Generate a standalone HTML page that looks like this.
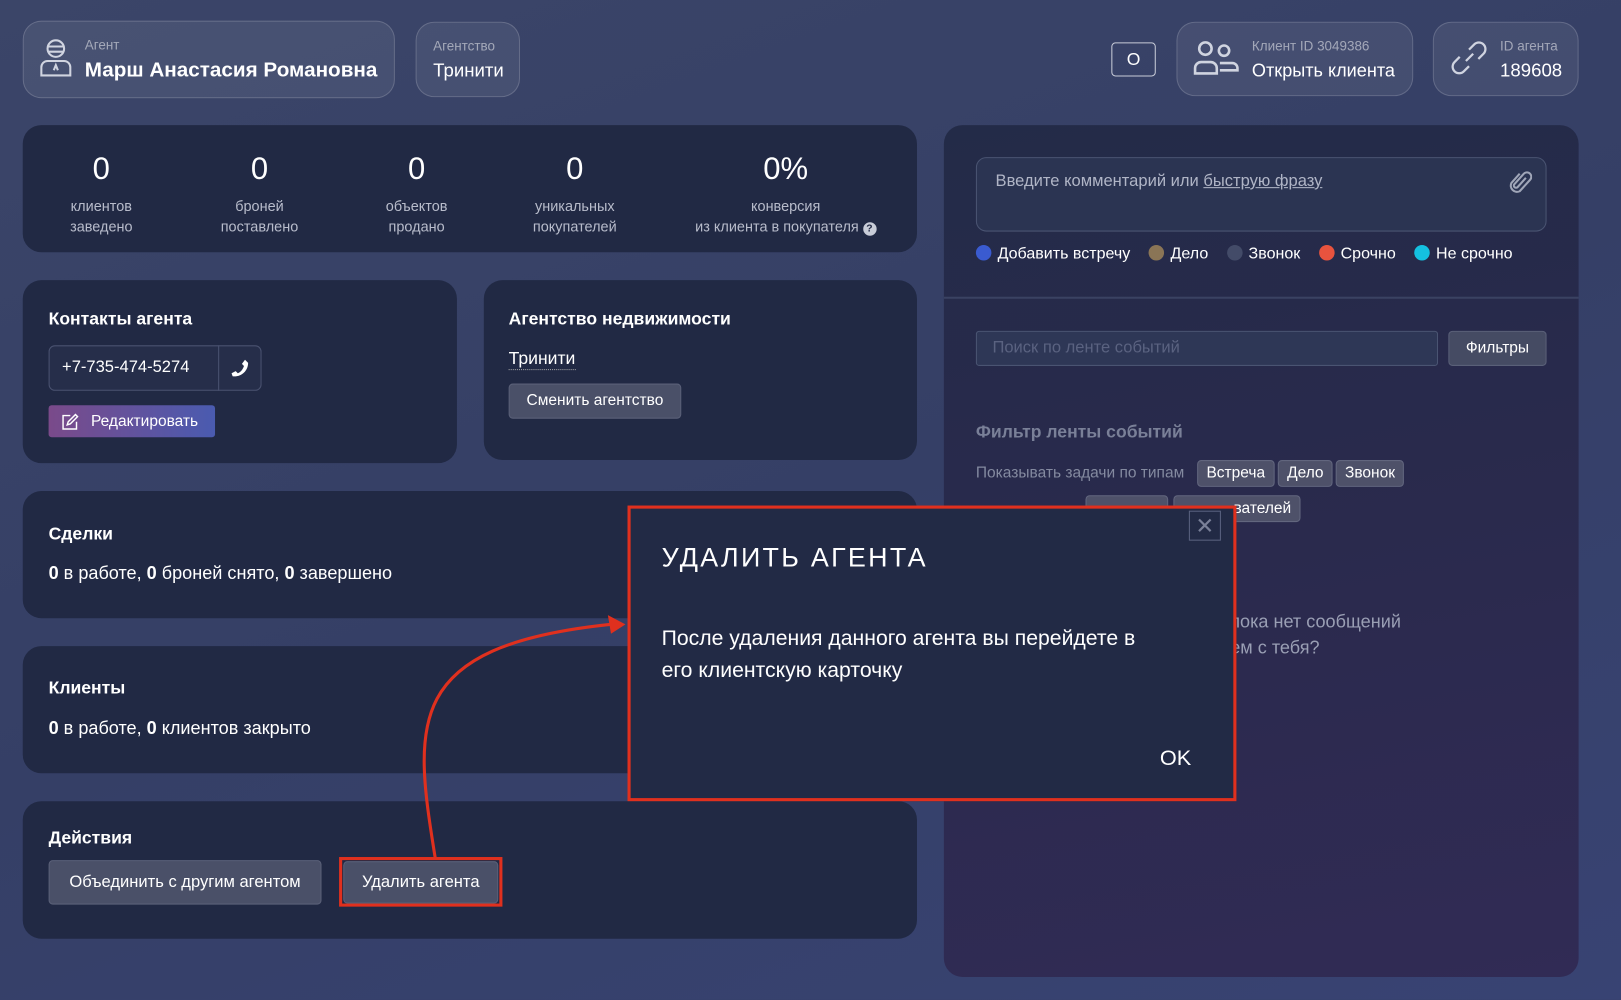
<!DOCTYPE html>
<html><head><meta charset="utf-8"><style>
*{box-sizing:border-box;margin:0;padding:0}
html,body{width:1621px;height:1000px;overflow:hidden;background:#37416a}
body{font-family:"Liberation Sans",sans-serif;color:#fff}
#w{position:absolute;left:0;top:0;width:1568px;height:967px;transform:scale(1.03380);transform-origin:0 0;background:linear-gradient(160deg,#3b4568 0%,#353f66 50%,#384373 100%)}
.a{position:absolute}
.glass{position:absolute;border-radius:18px;background:rgba(255,255,255,0.07);border:1px solid rgba(255,255,255,0.16)}
.card{position:absolute;background:#212944;border-radius:18px}
.lbl{font-size:13px;color:rgba(255,255,255,0.5)}
.h{font-size:17px;font-weight:bold}
.stat{position:absolute;width:200px;text-align:center;top:147px}
.stat b{display:block;font-size:30px;font-weight:normal;height:42px}
.stat span{display:block;font-size:14px;color:#b8bccb;line-height:20px}
.btn{position:absolute;background:#4a5068;border-radius:4px;font-size:15px;color:#fff;text-align:center;border:1px solid #5a6078}
.tag{position:absolute;background:#4e5169;border:1px solid #62667e;border-radius:4px;font-size:15px;top:445px;height:26px;line-height:24px;padding:0 8px}
.dot{display:inline-block;width:15px;height:15px;border-radius:50%;vertical-align:-2px;margin-right:6px}
.lg span.it{margin-right:18px}
</style></head><body><div id="w">

<div class="glass" style="left:22px;top:20px;width:360px;height:75px"></div>
<svg class="a" style="left:37px;top:37px" width="34" height="38" viewBox="0 0 34 38" fill="none" stroke="#d0d4e0" stroke-width="2"><circle cx="17" cy="10" r="8"/><path d="M9 8h16M10 13h14"/><path d="M3 36v-8a6 6 0 0 1 6-6h16a6 6 0 0 1 6 6v8z"/><path d="M15 31l2-5 2 5"/></svg>
<div class="a lbl" style="left:82px;top:36px">Агент</div>
<div class="a" style="left:82px;top:57px;font-size:20px;font-weight:bold">Марш Анастасия Романовна</div>
<div class="glass" style="left:402px;top:21px;width:101px;height:73px"></div>
<div class="a lbl" style="left:419px;top:37px">Агентство</div>
<div class="a" style="left:419px;top:58px;font-size:18px">Тринити</div>

<div class="a" style="left:1075px;top:41px;width:43px;height:33px;border:1px solid #c8ccd8;border-radius:4px;text-align:center;line-height:31px;font-size:17px">O</div>
<div class="glass" style="left:1138px;top:21px;width:229px;height:72px"></div>
<svg class="a" style="left:1154px;top:39px" width="46" height="34" viewBox="0 0 46 34" fill="none" stroke="#d0d4e0" stroke-width="2.5"><circle cx="12" cy="8" r="6"/><circle cx="30" cy="10" r="5"/><path d="M2 32v-5a6 6 0 0 1 6-6h9a6 6 0 0 1 6 6v5z"/><path d="M26 22h12a5 5 0 0 1 5 5v2H26"/></svg>
<div class="a lbl" style="left:1211px;top:37px">Клиент ID 3049386</div>
<div class="a" style="left:1211px;top:58px;font-size:17.5px">Открыть клиента</div>
<div class="glass" style="left:1386px;top:21px;width:141px;height:72px"></div>
<svg class="a" style="left:1402px;top:37px" width="38" height="38" viewBox="0 0 38 38" fill="none" stroke="#d0d4e0" stroke-width="2.2"><path d="M16 22l7-7"/><path d="M19 11l5-5a6 6 0 0 1 9 9l-5 5"/><path d="M19 27l-5 5a6 6 0 0 1-9-9l5-5"/></svg>
<div class="a lbl" style="left:1451px;top:37px">ID агента</div>
<div class="a" style="left:1451px;top:58px;font-size:18px">189608</div>

<div class="card" style="left:22px;top:121px;width:865px;height:123px"></div>
<div class="stat" style="left:-2px"><b>0</b><span>клиентов<br>заведено</span></div>
<div class="stat" style="left:151px"><b>0</b><span>броней<br>поставлено</span></div>
<div class="stat" style="left:303px"><b>0</b><span>объектов<br>продано</span></div>
<div class="stat" style="left:456px"><b>0</b><span>уникальных<br>покупателей</span></div>
<div class="stat" style="left:640px;width:240px"><b>0%</b><span>конверсия<br>из клиента в покупателя <span style="display:inline-block;width:13px;height:13px;border-radius:50%;background:#c8ccd8;color:#212944;font-size:10px;line-height:13px;font-weight:bold">?</span></span></div>

<div class="card" style="left:22px;top:271px;width:420px;height:177px"></div>
<div class="a h" style="left:47px;top:299px">Контакты агента</div>
<div class="a" style="left:47px;top:334px;width:206px;height:44px;border:1px solid #4a5270;border-radius:6px;background:#262e4a"></div>
<div class="a" style="left:211px;top:334px;width:1px;height:44px;background:#4a5270"></div>
<div class="a" style="left:60px;top:347px;font-size:16px">+7-735-474-5274</div>
<svg class="a" style="left:222px;top:346px" width="20" height="20" viewBox="0 0 20 20"><path d="M15 2l3 3c0 8-7 14-15 13l-1-3 4-2 2 2c3-1 5-4 6-7l-2-2z" fill="#fff"/></svg>
<div class="a" style="left:47px;top:392px;width:161px;height:31px;border-radius:3px;background:linear-gradient(90deg,#7a4a8a,#4a5bb0)"></div>
<svg class="a" style="left:59px;top:399px" width="18" height="18" viewBox="0 0 18 18" fill="none" stroke="#fff" stroke-width="1.4"><path d="M9 3H2v13h13V9"/><path d="M6 12l1-3 7-7 2 2-7 7z"/></svg>
<div class="a" style="left:88px;top:399px;font-size:15px">Редактировать</div>

<div class="card" style="left:468px;top:271px;width:419px;height:174px"></div>
<div class="a h" style="left:492px;top:299px">Агентство недвижимости</div>
<div class="a" style="left:492px;top:337px;font-size:17px;border-bottom:1px dotted #aaa">Тринити</div>
<div class="btn" style="left:492px;top:371px;width:167px;height:34px;line-height:32px">Сменить агентство</div>

<div class="card" style="left:22px;top:475px;width:865px;height:123px"></div>
<div class="a h" style="left:47px;top:507px">Сделки</div>
<div class="a" style="left:47px;top:544px;font-size:17.5px"><b>0</b> в работе, <b>0</b> броней снято, <b>0</b> завершено</div>
<div class="card" style="left:22px;top:625px;width:865px;height:123px"></div>
<div class="a h" style="left:47px;top:656px">Клиенты</div>
<div class="a" style="left:47px;top:694px;font-size:17.5px"><b>0</b> в работе, <b>0</b> клиентов закрыто</div>
<div class="card" style="left:22px;top:775px;width:865px;height:133px"></div>
<div class="a h" style="left:47px;top:801px">Действия</div>
<div class="btn" style="left:47px;top:832px;width:264px;height:43px;line-height:41px;font-size:16px">Объединить с другим агентом</div>
<div class="btn" style="left:332px;top:833px;width:150px;height:41px;line-height:39px;font-size:16px">Удалить агента</div>
<div class="a" style="left:328px;top:829px;width:158px;height:48px;border:3px solid #e0301e"></div>

<div class="a" style="left:913px;top:121px;width:614px;height:824px;border-radius:18px;background:linear-gradient(170deg,#232b48 0%,#2a2a4d 50%,#312b55 100%)"></div>
<div class="a" style="left:913px;top:287px;width:614px;height:2px;background:#3a4262"></div>
<div class="a" style="left:944px;top:152px;width:552px;height:72px;border:1px solid #4a5472;border-radius:10px;background:#2b3452"></div>
<div class="a" style="left:963px;top:167px;font-size:16px;color:#b0b5c6">Введите комментарий или <span style="text-decoration:underline">быструю фразу</span></div>
<svg class="a" style="left:1460px;top:164px" width="22" height="24" viewBox="0 0 22 24" fill="none" stroke="#a0a6b8" stroke-width="2"><path d="M16 8l-8 9a2 2 0 0 1-3-3l9-10a4 4 0 0 1 6 6l-10 11a6 6 0 0 1-8-8l8-9"/></svg>
<div class="a lg" style="left:944px;top:237px;font-size:15.5px;white-space:nowrap"><span class="it"><span class="dot" style="background:#3a5bd0"></span>Добавить встречу</span><span class="it"><span class="dot" style="background:#8a7556"></span>Дело</span><span class="it"><span class="dot" style="background:#434b68"></span>Звонок</span><span class="it"><span class="dot" style="background:#e8533e"></span>Срочно</span><span><span class="dot" style="background:#14c0e0"></span>Не срочно</span></div>
<div class="a" style="left:944px;top:320px;width:447px;height:34px;border:1px solid #4a5472;border-radius:3px;background:#2e3756"></div>
<div class="a" style="left:960px;top:328px;font-size:16px;color:#5a6280">Поиск по ленте событий</div>
<div class="btn" style="left:1401px;top:320px;width:95px;height:34px;line-height:32px;background:#454b63">Фильтры</div>
<div class="a" style="left:944px;top:408px;font-size:17px;font-weight:bold;color:#7a8098">Фильтр ленты событий</div>
<div class="a" style="left:944px;top:449px;font-size:15px;color:#848aa0">Показывать задачи по типам</div>
<div class="tag" style="left:1158px">Встреча</div>
<div class="tag" style="left:1236px">Дело</div>
<div class="tag" style="left:1292px">Звонок</div>
<div class="tag" style="left:1050px;top:479px;width:80px">&nbsp;</div>
<div class="tag" style="left:1135px;top:479px;width:123px;text-align:right">вателей</div>
<div class="a" style="left:1190px;top:589px;font-size:17.5px;color:#9a9fb4;line-height:25px">пока нет сообщений<br>ем с тебя?</div>

<div class="a" style="left:607px;top:489px;width:589px;height:286px;border:3px solid #e0301e;background:#222a45"></div>
<div class="a" style="left:1150px;top:494px;width:31px;height:29px;border:1px solid #5a6280;text-align:center;line-height:27px;font-size:22px;color:#7a8098">✕</div>
<div class="a" style="left:640px;top:524px;font-size:26px;letter-spacing:2.2px">УДАЛИТЬ АГЕНТА</div>
<div class="a" style="left:640px;top:602px;font-size:20.5px;line-height:31px">После удаления данного агента вы перейдете в<br>его клиентскую карточку</div>
<div class="a" style="left:1122px;top:722px;font-size:21px">OK</div>

<svg class="a" style="left:0;top:0" width="1568" height="967"><path d="M421 830 C400 700 390 625 590 604" fill="none" stroke="#e0301e" stroke-width="3"/><path d="M605 604 L588 595 L591 613 Z" fill="#e0301e"/></svg>
</div></body></html>
